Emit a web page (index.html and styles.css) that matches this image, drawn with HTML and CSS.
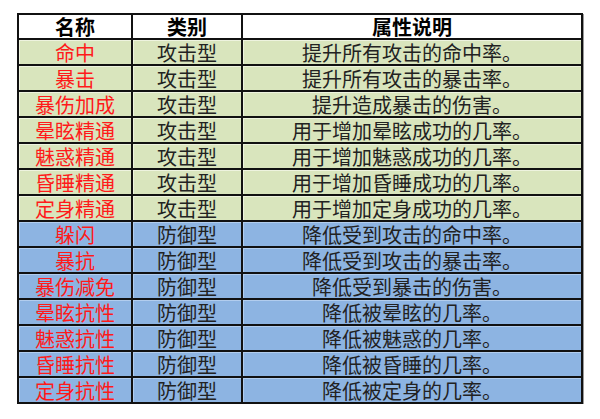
FILE: index.html
```html
<!DOCTYPE html>
<html lang="zh-CN">
<head>
<meta charset="utf-8">
<title>属性说明</title>
<link rel="stylesheet" href="styles.css">
</head>
<body>
<div class="sheet">
  <div class="cell head">名称</div><div class="cell head">类别</div><div class="cell head">属性说明</div>

  <div class="cell atk name">命中</div><div class="cell atk">攻击型</div><div class="cell atk">提升所有攻击的命中率。</div>
  <div class="cell atk name">暴击</div><div class="cell atk">攻击型</div><div class="cell atk">提升所有攻击的暴击率。</div>
  <div class="cell atk name">暴伤加成</div><div class="cell atk">攻击型</div><div class="cell atk">提升造成暴击的伤害。</div>
  <div class="cell atk name">晕眩精通</div><div class="cell atk">攻击型</div><div class="cell atk">用于增加晕眩成功的几率。</div>
  <div class="cell atk name">魅惑精通</div><div class="cell atk">攻击型</div><div class="cell atk">用于增加魅惑成功的几率。</div>
  <div class="cell atk name">昏睡精通</div><div class="cell atk">攻击型</div><div class="cell atk">用于增加昏睡成功的几率。</div>
  <div class="cell atk name">定身精通</div><div class="cell atk">攻击型</div><div class="cell atk">用于增加定身成功的几率。</div>

  <div class="cell def name">躲闪</div><div class="cell def">防御型</div><div class="cell def">降低受到攻击的命中率。</div>
  <div class="cell def name">暴抗</div><div class="cell def">防御型</div><div class="cell def">降低受到攻击的暴击率。</div>
  <div class="cell def name">暴伤减免</div><div class="cell def">防御型</div><div class="cell def">降低受到暴击的伤害。</div>
  <div class="cell def name">晕眩抗性</div><div class="cell def">防御型</div><div class="cell def">降低被晕眩的几率。</div>
  <div class="cell def name">魅惑抗性</div><div class="cell def">防御型</div><div class="cell def">降低被魅惑的几率。</div>
  <div class="cell def name">昏睡抗性</div><div class="cell def">防御型</div><div class="cell def">降低被昏睡的几率。</div>
  <div class="cell def name">定身抗性</div><div class="cell def">防御型</div><div class="cell def">降低被定身的几率。</div>
</div>
</body>
</html>
```

FILE: styles.css
```css
html, body {
  margin: 0;
  padding: 0;
  background: #ffffff;
}

body {
  padding: 13px 0 0 17px;
  font-family: "Noto Sans CJK SC", "Noto Sans", sans-serif;
}

.sheet {
  display: grid;
  grid-template-columns: 112px 108px 338px;
  grid-template-rows: 23px repeat(14, 24px);
  gap: 2px;
  padding: 2px;
  width: 562px;
  background: #111111;
  box-shadow: 1px 1px 0 #9a9a9a;
}

.cell {
  display: flex;
  align-items: center;
  justify-content: center;
  padding-top: 2px;
  font-size: 20px;
  line-height: 22px;
  color: #222222;
  white-space: nowrap;
}

.head {
  padding-top: 1px;
  background: #ffffff;
  color: #000000;
  font-weight: 700;
}

.atk {
  background: #d9e5bd;
  box-shadow: inset 1px 1px 0 #eef3df;
}

.def {
  background: #8db4e2;
  box-shadow: inset 1px 1px 0 #b2cdee;
}

.name {
  color: #ff1a1a;
}
```
